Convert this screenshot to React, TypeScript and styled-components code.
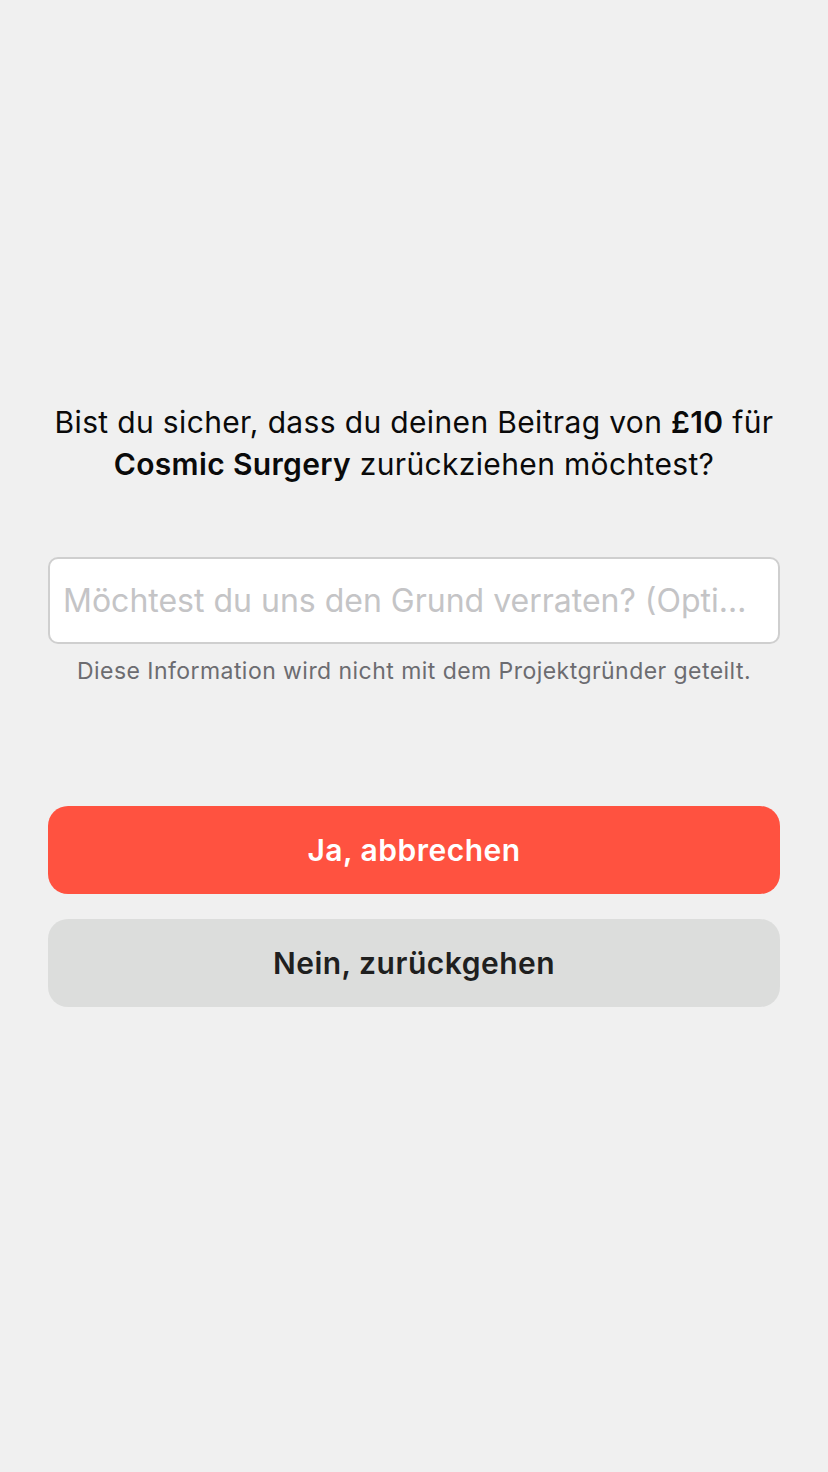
import React from 'react';
import styled, { createGlobalStyle } from 'styled-components';

const GlobalStyle = createGlobalStyle`
  html, body {
    margin: 0;
    padding: 0;
    background: #f0f0f0;
  }
  body {
    font-family: Inter, Roboto, "Liberation Sans", sans-serif;
    -webkit-font-smoothing: antialiased;
  }
`;

const Screen = styled.div`
  min-height: 1472px;
  box-sizing: border-box;
  padding: 401px 48px 0;
  display: flex;
  flex-direction: column;
`;

const Question = styled.p`
  margin: 0;
  font-size: 30px;
  line-height: 42px;
  letter-spacing: 0.35px;
  color: #0a0a0a;
  text-align: center;

  strong {
    font-weight: 600;
  }
`;

const ReasonInput = styled.input`
  margin-top: 72px;
  height: 87px;
  box-sizing: border-box;
  width: 100%;
  border: 2px solid #cfcfcf;
  border-radius: 10px;
  background: #fff;
  padding: 0 26px 0 13px;
  font-family: inherit;
  font-size: 32px;
  color: #222;
  outline: none;
  text-overflow: ellipsis;

  &::placeholder {
    color: #c4c4c6;
  }
`;

const Hint = styled.p`
  margin: 12px 0 0;
  font-size: 23px;
  line-height: 30px;
  letter-spacing: 0.45px;
  color: #6c6c70;
  text-align: center;
`;

const Actions = styled.div`
  margin-top: 120px;
  display: flex;
  flex-direction: column;
  gap: 25px;
`;

const ActionButton = styled.button<{ $variant: 'danger' | 'neutral' }>`
  height: 88px;
  border: none;
  border-radius: 20px;
  font-family: inherit;
  font-size: 30px;
  font-weight: 600;
  letter-spacing: 0.5px;
  background: ${(p) => (p.$variant === 'danger' ? '#ff5240' : '#dcdddc')};
  color: ${(p) => (p.$variant === 'danger' ? '#ffffff' : '#1f1f1f')};
  cursor: pointer;
`;

export default function App() {
  return (
    <>
      <GlobalStyle />
      <Screen>
        <Question>
          Bist du sicher, dass du deinen Beitrag von <strong>£10</strong> für{' '}
          <strong>Cosmic Surgery</strong> zurückziehen möchtest?
        </Question>
        <ReasonInput placeholder="Möchtest du uns den Grund verraten? (Optional)" />
        <Hint>Diese Information wird nicht mit dem Projektgründer geteilt.</Hint>
        <Actions>
          <ActionButton $variant="danger">Ja, abbrechen</ActionButton>
          <ActionButton $variant="neutral">Nein, zurückgehen</ActionButton>
        </Actions>
      </Screen>
    </>
  );
}
